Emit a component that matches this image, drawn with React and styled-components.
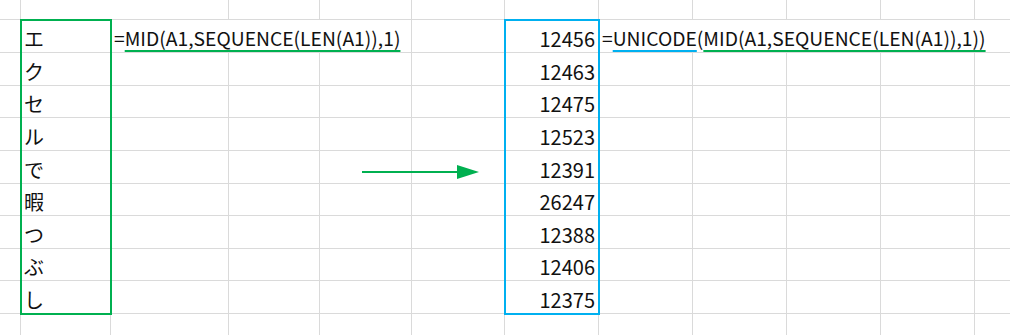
import React from 'react'
import styled, { createGlobalStyle } from 'styled-components'

const GlobalStyle = createGlobalStyle`
  html, body {
    margin: 0;
    padding: 0;
    background: #fff;
    overflow: hidden;
  }
  body {
    font-family: "Noto Sans CJK JP", "Noto Sans", sans-serif;
  }
`

const colWidths = [21, 90, 118, 91, 92, 93, 94, 94, 94, 94, 94, 60]
const rowHeights = [20, 33, 33, 32, 33, 33, 32, 33, 32, 33, 30]

const chars = ['エ', 'ク', 'セ', 'ル', 'で', '暇', 'つ', 'ぶ', 'し']
const codes = [12456, 12463, 12475, 12523, 12391, 26247, 12388, 12406, 12375]

const GREEN = '#00b050'
const BLUE = '#00b0f0'

// empty cells for one run of columns
const blanks = (n, prefix) =>
  Array.from({ length: n }, (_, k) => <Cell key={`${prefix}-${k}`} />)

function App() {
  return (
    <>
      <GlobalStyle />
      <Sheet>
        {/* top strip */}
        <Cell />
        <Cell $span={2} />
        {blanks(9, 'top')}

        {/* source column A, boxed in green */}
        <Range $col={2} $color={GREEN}>
          {chars.map((ch) => (
            <Cell key={ch}>{ch}</Cell>
          ))}
        </Range>

        {/* result column F, boxed in blue */}
        <Range $col={7} $color={BLUE}>
          {codes.map((n) => (
            <Cell key={n} $align="right">{n}</Cell>
          ))}
        </Range>

        {chars.map((_, i) =>
          i === 0 ? (
            <React.Fragment key={i}>
              <Cell />
              <Cell $span={3}>
                <Formula>
                  =<Mark $color={GREEN}>MID(A1,SEQUENCE(LEN(A1)),1)</Mark>
                </Formula>
              </Cell>
              <Cell />
              <Cell $span={5}>
                <Formula>
                  =<Mark $color={BLUE}>UNICODE</Mark>(
                  <Mark $color={GREEN}>MID(A1,SEQUENCE(LEN(A1)),1))</Mark>
                </Formula>
              </Cell>
            </React.Fragment>
          ) : (
            <React.Fragment key={i}>
              <Cell />
              {blanks(4, `b${i}`)}
              {blanks(5, `g${i}`)}
            </React.Fragment>
          )
        )}

        {blanks(12, 'end')}

        <Arrow width="120" height="16" viewBox="0 0 120 16">
          <line x1="0" y1="8" x2="98" y2="8" stroke={GREEN} strokeWidth="2" />
          <polygon points="95,1 117,8 95,15" fill={GREEN} />
        </Arrow>
      </Sheet>
    </>
  )
}

const Sheet = styled.div`
  position: relative;
  display: grid;
  grid-template-columns: ${colWidths.map((w) => `${w}px`).join(' ')};
  grid-template-rows: ${rowHeights.map((h) => `${h}px`).join(' ')};
  width: max-content;
  font-size: 20px;
  color: #111;
`

const Cell = styled.div`
  box-sizing: border-box;
  grid-column: span ${(p) => p.$span || 1};
  border-right: 1px solid #dadada;
  border-bottom: 1px solid #dadada;
  display: flex;
  align-items: flex-end;
  justify-content: ${(p) => (p.$align === 'right' ? 'flex-end' : 'flex-start')};
  padding: 0 3px 3px 3px;
  line-height: 1;
  white-space: nowrap;
  overflow: visible;
`

const Formula = styled.span`
  font-size: 19.3px;
  position: relative;
  top: -1px;
`

const Range = styled.div`
  position: relative;
  grid-column: ${(p) => p.$col};
  grid-row: 2 / 11;
  display: grid;
  grid-template-rows: subgrid;

  &::after {
    content: '';
    position: absolute;
    inset: -1px;
    border: 2px solid ${(p) => p.$color};
    pointer-events: none;
  }
`

const Mark = styled.span`
  text-decoration: underline;
  text-decoration-color: ${(p) => p.$color};
  text-decoration-thickness: 2px;
  text-underline-offset: 4px;
  text-decoration-skip-ink: none;
`

const Arrow = styled.svg`
  position: absolute;
  left: 362px;
  top: 164px;
`

export default App
